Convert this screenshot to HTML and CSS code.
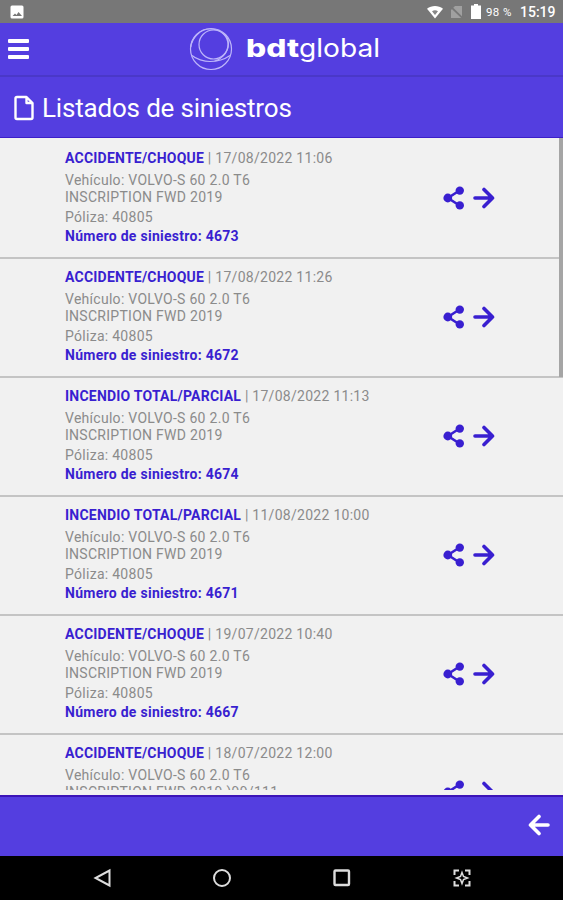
FILE: index.html
```html
<!DOCTYPE html>
<html lang="es">
<head>
  <meta charset="UTF-8" />
  <meta name="viewport" content="width=device-width, initial-scale=1.0" />
  <title>Listados de siniestros</title>
  <link rel="stylesheet" href="styles.css">
</head>
<body>
  <svg class="sprite" width="0" height="0">
    <symbol id="share" viewBox="0 0 22 24">
      <path d="M16.500 4.500 5 12l11.500 7.500" fill="none" stroke="currentColor" stroke-width="2.600" />
      <circle cx="16.800" cy="4.600" r="4.200" fill="currentColor" />
      <circle cx="4.800" cy="12" r="4.400" fill="currentColor" />
      <circle cx="16.800" cy="19.400" r="4.200" fill="currentColor" />
    </symbol>
    <symbol id="arrow" viewBox="0 0 22 22">
      <path d="M2 11H19M11 2.500 19.500 11 11 19.500" fill="none" stroke="currentColor" stroke-width="3.600" stroke-linecap="round" stroke-linejoin="round" />
    </symbol>
  </svg>

  <div class="app">
    <div class="status">
      <svg class="foto" width="14" height="14" viewBox="0 0 14 14">
        <rect x="0.500" y="0.500" width="13" height="13" rx="1.500" fill="#fff" />
        <path d="M2.500 11 5 8.500l1.500 1.500 2-3 3.500 4z" fill="#777" />
      </svg>
      <svg class="wifi" width="18" height="14" viewBox="0 0 18 14">
        <path d="M1 3.800C5.500.2 12.500.2 17 3.800L9 13.500z" fill="#fff" />
        <path d="M6 6.200q3-2 6 0L9 10z" fill="#888" />
      </svg>
      <svg class="sim" width="13" height="14" viewBox="0 0 13 14">
        <path d="M5 1h7v12H1V5z" fill="#a0a0a0" />
        <path d="M0 1 13 13.500" stroke="#777" stroke-width="1.800" />
      </svg>
      <svg class="bateria" width="10" height="15" viewBox="0 0 10 15">
        <path d="M3 0h4v1.500h3V15H0V1.500h3z" fill="#fff" />
      </svg>
      <span class="carga">98 %</span>
      <span class="hora">15:19</span>
    </div>

    <header class="header">
      <div class="menu"><span></span><span></span><span></span></div>
      <svg class="logo" width="192" height="46" viewBox="0 0 192 46">
        <g fill="none" stroke="#bdb5fa" stroke-width="1.200">
          <circle cx="22" cy="23" r="20.500" />
          <circle cx="24.500" cy="18.500" r="14.500" />
          <path d="M1.800 21C3 11 12 3 21 3c10 0 18.500 6.500 18.500 14.500C39.500 27 31 35.500 21 35.500 15 35.500 7 33 3 29.500M41 29.500C36 33 29 35.500 21 35.500" />
        </g>
        <text class="logo-bold" x="57" y="31" textLength="53" lengthAdjust="spacingAndGlyphs">bdt</text>
        <text class="logo-light" x="110" y="31" textLength="81" lengthAdjust="spacingAndGlyphs">global</text>
      </svg>
    </header>

    <div class="titulo">
      <svg width="20" height="26" viewBox="0 0 20 26">
        <path d="M3 2h9.500l6 6v14.500a1.500 1.500 0 0 1-1.500 1.500H3a1.500 1.500 0 0 1-1.500-1.500v-19A1.500 1.500 0 0 1 3 2zM12.500 2v6h6" fill="none" stroke="#fff" stroke-width="2.400" stroke-linejoin="round" />
      </svg>
      <h1>Listados de siniestros</h1>
    </div>

    <main class="contenido">
      <div class="lista">
        <div class="item">
          <div class="datos">
            <p class="tipo"><b>ACCIDENTE/CHOQUE</b> | 17/08/2022 11:06</p>
            <p class="vehiculo">Vehículo: VOLVO-S 60 2.0 T6<br>INSCRIPTION FWD 2019</p>
            <p class="poliza">Póliza: 40805</p>
            <p class="numero">Número de siniestro: 4673</p>
          </div>
          <div class="acciones"><svg class="share"><use href="#share" /></svg><svg class="arrow"><use href="#arrow" /></svg></div>
        </div>
        <div class="item">
          <div class="datos">
            <p class="tipo"><b>ACCIDENTE/CHOQUE</b> | 17/08/2022 11:26</p>
            <p class="vehiculo">Vehículo: VOLVO-S 60 2.0 T6<br>INSCRIPTION FWD 2019</p>
            <p class="poliza">Póliza: 40805</p>
            <p class="numero">Número de siniestro: 4672</p>
          </div>
          <div class="acciones"><svg class="share"><use href="#share" /></svg><svg class="arrow"><use href="#arrow" /></svg></div>
        </div>
        <div class="item">
          <div class="datos">
            <p class="tipo"><b>INCENDIO TOTAL/PARCIAL</b> | 17/08/2022 11:13</p>
            <p class="vehiculo">Vehículo: VOLVO-S 60 2.0 T6<br>INSCRIPTION FWD 2019</p>
            <p class="poliza">Póliza: 40805</p>
            <p class="numero">Número de siniestro: 4674</p>
          </div>
          <div class="acciones"><svg class="share"><use href="#share" /></svg><svg class="arrow"><use href="#arrow" /></svg></div>
        </div>
        <div class="item">
          <div class="datos">
            <p class="tipo"><b>INCENDIO TOTAL/PARCIAL</b> | 11/08/2022 10:00</p>
            <p class="vehiculo">Vehículo: VOLVO-S 60 2.0 T6<br>INSCRIPTION FWD 2019</p>
            <p class="poliza">Póliza: 40805</p>
            <p class="numero">Número de siniestro: 4671</p>
          </div>
          <div class="acciones"><svg class="share"><use href="#share" /></svg><svg class="arrow"><use href="#arrow" /></svg></div>
        </div>
        <div class="item">
          <div class="datos">
            <p class="tipo"><b>ACCIDENTE/CHOQUE</b> | 19/07/2022 10:40</p>
            <p class="vehiculo">Vehículo: VOLVO-S 60 2.0 T6<br>INSCRIPTION FWD 2019</p>
            <p class="poliza">Póliza: 40805</p>
            <p class="numero">Número de siniestro: 4667</p>
          </div>
          <div class="acciones"><svg class="share"><use href="#share" /></svg><svg class="arrow"><use href="#arrow" /></svg></div>
        </div>
        <div class="item">
          <div class="datos">
            <p class="tipo"><b>ACCIDENTE/CHOQUE</b> | 18/07/2022 12:00</p>
            <p class="vehiculo">Vehículo: VOLVO-S 60 2.0 T6<br>INSCRIPTION FWD 2019 )99/111</p>
          </div>
          <div class="acciones"><svg class="share"><use href="#share" /></svg><svg class="arrow"><use href="#arrow" /></svg></div>
        </div>
      </div>
      <div class="scroll"></div>
    </main>

    <footer class="footer">
      <svg class="volver"><use href="#arrow" /></svg>
    </footer>

    <nav class="nav">
      <svg viewBox="0 0 20 20"><path d="M17.500 2.500v15L3.500 10z" fill="none" stroke="#ddd" stroke-width="2" /></svg>
      <svg viewBox="0 0 20 20"><circle cx="10" cy="10" r="8" fill="none" stroke="#ddd" stroke-width="2" /></svg>
      <svg viewBox="0 0 20 20"><rect x="2.500" y="2.500" width="14.500" height="14.500" rx="1" fill="none" stroke="#ddd" stroke-width="2.400" /></svg>
      <svg viewBox="0 0 20 20">
        <path d="M2.500 7V2.500H7M13 2.500h4.500V7M17.500 13v4.500H13M7 17.500H2.500V13" fill="none" stroke="#ddd" stroke-width="2" />
        <path d="M10 4.500 11.500 8.500 15.500 10 11.500 11.500 10 15.500 8.500 11.500 4.500 10 8.500 8.500z" fill="none" stroke="#ddd" stroke-width="1.500" />
      </svg>
    </nav>
  </div>
</body>
</html>
```
FILE: styles.css
```css
* {
  box-sizing: border-box;
  margin: 0;
  padding: 0;
}

body {
  font-family: Roboto, Arial, sans-serif;
  background: #f1f1f1;
  color: #8b8b8b;
}

svg {
  display: block;
  flex: none;
}

.sprite {
  position: absolute;
}

.app {
  display: flex;
  flex-direction: column;
  height: 900px;
  overflow: hidden;
}

.status {
  display: flex;
  align-items: center;
  height: 23px;
  flex: none;
  padding: 0 7px 0 10px;
  background: #777;
  color: #fff;
}

.wifi {
  margin-left: auto;
}

.sim {
  margin-left: 6px;
}

.bateria {
  margin: 0 5px 0 8px;
}

.carga {
  width: 34px;
  font-size: 11.5px;
  font-weight: 400;
  letter-spacing: 0.4px;
  white-space: nowrap;
}

.hora {
  width: 36px;
  font-size: 14px;
  font-weight: 500;
  white-space: nowrap;
}

.header {
  display: flex;
  align-items: center;
  height: 54px;
  flex: none;
  padding: 0 8px;
  background: #543ee0;
  border-bottom: 2px solid #4a38c8;
}

.menu {
  display: flex;
  flex-direction: column;
  gap: 4px;
  width: 21px;
}

.menu span {
  height: 4px;
  background: #fff;
  border-radius: 1px;
}

.logo {
  margin-left: 160px;
}

.logo text {
  font-family: Inter, Arial, sans-serif;
  font-size: 25px;
  fill: #fff;
}

.logo .logo-bold {
  font-weight: 800;
}

.titulo {
  display: flex;
  align-items: center;
  gap: 8px;
  height: 61px;
  flex: none;
  padding: 2px 14px 0;
  background: #543ee0;
  border-bottom: 1px solid #3c1fc9;
  color: #fff;
}

h1 {
  font-size: 26px;
  font-weight: 400;
  line-height: 32px;
  letter-spacing: -0.18px;
}

.contenido {
  display: flex;
  height: 652px;
  margin-bottom: 5px;
  flex: none;
  overflow: hidden;
}

.lista {
  flex: 1;
  margin-right: -4px;
  padding-top: 2px;
}

.item {
  display: flex;
  align-items: center;
  height: 119px;
  padding-left: 65px;
  border-bottom: 2px solid #c4c4c4;
}

.item:last-child {
  align-items: flex-start;
}

.datos {
  width: 378px;
  font-size: 14px;
  line-height: 17px;
  letter-spacing: 0.28px;
  align-self: flex-start;
  padding-top: 10px;
  white-space: nowrap;
}

.tipo {
  margin-bottom: 5px;
}

.tipo b,
.numero {
  color: #391fd0;
  font-weight: 700;
}

.tipo b {
  letter-spacing: 0.22px;
}

.poliza {
  margin: 3px 0 2px;
}

.acciones {
  display: flex;
  align-items: center;
  gap: 8px;
  padding-bottom: 2px;
  color: #391fd0;
}

.item:last-child .acciones {
  padding-top: 45px;
}

.share {
  width: 22px;
  height: 24px;
}

.arrow {
  width: 22px;
  height: 22px;
}

.scroll {
  width: 4px;
  height: 239px;
  background: #a5a5a5;
  z-index: 1;
}

.footer {
  display: flex;
  align-items: center;
  justify-content: flex-end;
  height: 61px;
  flex: none;
  padding: 0 13px 3px 0;
  background: #543ee0;
  border-top: 2px solid #3c14b8;
  color: #fff;
}

.volver {
  width: 22px;
  height: 22px;
  transform: scaleX(-1);
}

.nav {
  display: flex;
  align-items: center;
  justify-content: space-between;
  height: 44px;
  flex: none;
  padding: 0 91px 0 92px;
  background: #000;
}

.nav svg {
  width: 20px;
  height: 20px;
}
```
